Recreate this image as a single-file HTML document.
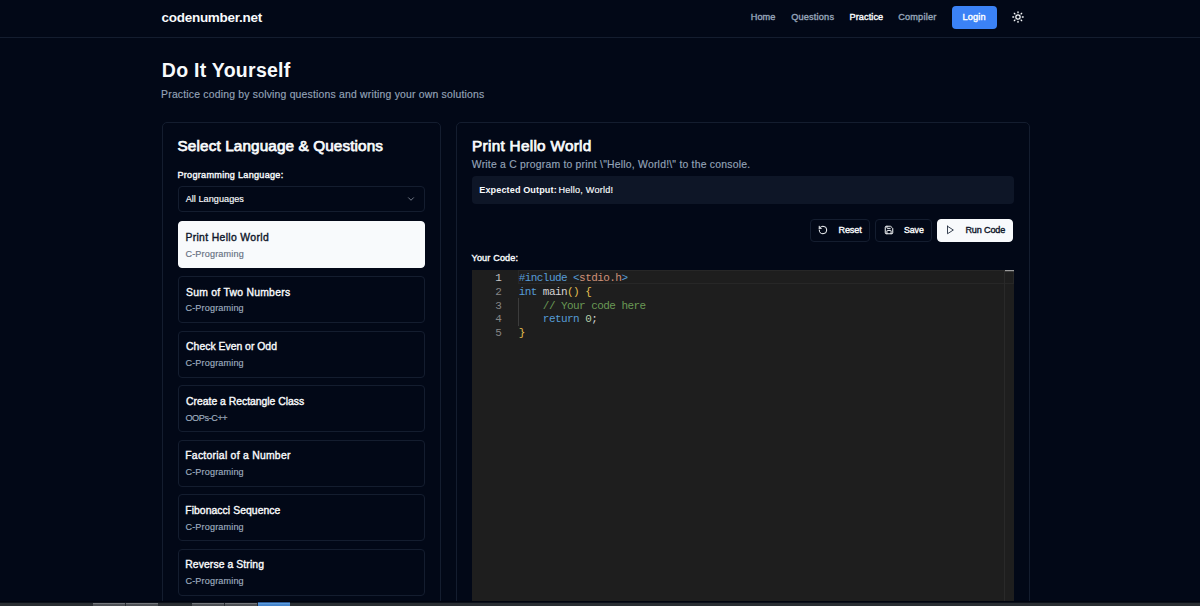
<!DOCTYPE html>
<html lang="en">
<head>
<meta charset="utf-8">
<title>Do It Yourself - codenumber.net</title>
<style>
*{box-sizing:border-box;margin:0;padding:0}
html,body{width:1200px;height:606px;overflow:hidden;background:#020817}
body{font-family:"Liberation Sans",sans-serif;color:#f8fafc;position:relative}
.a,.t{position:absolute;white-space:nowrap}
.t{z-index:5}
#hdr{left:0;top:37px;width:1200px;height:1px;background:#141d2f}
#loginb{left:952px;top:6px;width:45px;height:23px;border-radius:4px;background:#3b82f6}
#sun{left:1012px;top:11px;width:12px;height:12px}
.card{border:1px solid #141d2f;border-radius:5px}
#c1{left:162px;top:122px;width:279px;height:520px}
#c2{left:456px;top:122px;width:574px;height:520px}
#sel{left:178px;top:186px;width:247px;height:26px;border:1px solid #141d2f;border-radius:4px}
#chev{left:406.2px;top:193.6px;width:10px;height:10px}
.q{left:178px;width:247px;border:1px solid #141d2f;border-radius:4px}
.q.on{background:#f8fafc;border-color:#f8fafc}
#exp{left:472px;top:176px;width:542px;height:28px;border-radius:4px;background:#0e1627}
.btn{top:219px;height:23px;border:1px solid #141d2f;border-radius:4px}
#run{background:#f8fafc;border-color:#f8fafc}
.ic{top:225.3px;width:10px;height:10px;stroke-width:2.4}
#ed{left:472px;top:270px;width:542px;height:340px;background:#1e1e1e;overflow:hidden;font-family:"Liberation Mono",monospace;font-size:11px;letter-spacing:-0.561px}
.ln{position:absolute;left:0;margin-top:1px;width:29.3px;text-align:right;color:#858585;height:14px;line-height:14px}
.ln.cur{color:#c6c6c6}
.cl{position:absolute;left:46.7px;margin-top:1px;height:14px;line-height:14px;white-space:pre;color:#d4d4d4}
#curline{position:absolute;left:46px;top:0;width:496px;height:14px;border:1px solid #272727}
#ruler{position:absolute;left:532px;top:0;width:10px;height:340px;border-left:1px solid #292929}
#rcur{position:absolute;left:533px;top:0;width:9px;height:1px;background:#9a9a9a;box-shadow:0 1px 0 rgba(150,150,150,.25)}
#guide{position:absolute;left:46px;top:28px;width:1px;height:28px;background:#3c3c3c}
#bar{left:0;top:601px;width:1200px;height:5px;background:linear-gradient(#01040e 0,#01040e 1px,#0c111b 1px,#0c111b 2px,#2a2e33 2px,#2a2e33 5px)}
.tab{top:603px;height:3px;background:linear-gradient(#74777c 0,#74777c 1px,#505358 1px,#4a4d52 3px)}
#btab{left:258px;top:601px;width:32px;height:5px;background:linear-gradient(#01030a 0,#01030a 1px,#2c5c9c 1px,#2c5c9c 2px,#5c9cdc 2px,#5c9cdc 3px,#4a8ad0 3px,#3f7ec6 5px)}
</style>
</head>
<body>
<div id="hdr" class="a"></div>
<div id="loginb" class="a"></div>
<svg id="sun" class="a" viewBox="0 0 24 24" fill="none" stroke="#f8fafc" stroke-width="2" stroke-linecap="round" stroke-linejoin="round"><circle cx="12" cy="12" r="4.3" stroke-width="2.5"/><path stroke-width="2.7" d="M12 1.7v1.6M12 20.7v1.6M4.7 4.7l1.1 1.1M18.2 18.2l1.1 1.1M1.7 12h1.6M20.7 12h1.6M5.8 18.2l-1.1 1.1M19.3 4.7l-1.1 1.1"/></svg>
<div id="c1" class="a card"></div>
<div id="c2" class="a card"></div>
<div id="sel" class="a"></div>
<svg id="chev" class="a" viewBox="0 0 24 24" fill="none" stroke="#8a92a0" stroke-width="2" stroke-linecap="round" stroke-linejoin="round"><path d="M6 9l6 6 6-6"/></svg>
<div class="a q on" style="top:221px;height:47px"></div>
<div class="a q" style="top:276px;height:47px"></div>
<div class="a q" style="top:331px;height:47px"></div>
<div class="a q" style="top:385px;height:47px"></div>
<div class="a q" style="top:440px;height:47px"></div>
<div class="a q" style="top:494px;height:47px"></div>
<div class="a q" style="top:549px;height:47px"></div>
<div id="exp" class="a"></div>
<div class="a btn" style="left:810px;width:60px"></div>
<div class="a btn" style="left:875px;width:57px"></div>
<div id="run" class="a btn" style="left:937px;width:76px"></div>
<svg class="a ic" style="left:818.3px" viewBox="0 0 24 24" fill="none" stroke="#f8fafc" stroke-linecap="round" stroke-linejoin="round"><path d="M3 12a9 9 0 1 0 9-9 9.75 9.75 0 0 0-6.74 2.74L3 8"/><path d="M3 3v5h5"/></svg>
<svg class="a ic" style="left:883.6px" viewBox="0 0 24 24" fill="none" stroke="#f8fafc" stroke-linecap="round" stroke-linejoin="round"><path d="M15.2 3a2 2 0 0 1 1.4.6l3.8 3.8a2 2 0 0 1 .6 1.4V19a2 2 0 0 1-2 2H5a2 2 0 0 1-2-2V5a2 2 0 0 1 2-2z"/><path d="M17 21v-7a1 1 0 0 0-1-1H8a1 1 0 0 0-1 1v7"/><path d="M7 3v4a1 1 0 0 0 1 1h7"/></svg>
<svg class="a ic" style="left:944.5px;stroke-width:2.1" viewBox="0 0 24 24" fill="none" stroke="#1e293b" stroke-linecap="round" stroke-linejoin="round"><polygon points="6 3 20 12 6 21 6 3"/></svg>
<div id="ed" class="a">
<div id="curline"></div>
<div id="guide"></div>
<div class="ln cur" style="top:0">1</div>
<div class="ln" style="top:13.8px">2</div>
<div class="ln" style="top:27.5px">3</div>
<div class="ln" style="top:41.3px">4</div>
<div class="ln" style="top:55px">5</div>
<div class="cl" style="top:0"><span style="color:#569cd6">#include </span><span style="color:#569cd6">&lt;</span><span style="color:#ce9178">stdio.h</span><span style="color:#569cd6">&gt;</span></div>
<div class="cl" style="top:13.8px"><span style="color:#569cd6">int</span> main<span style="color:#e6c050">()</span> <span style="color:#e6c050">{</span></div>
<div class="cl" style="top:27.5px">    <span style="color:#6a9955">// Your code here</span></div>
<div class="cl" style="top:41.3px">    <span style="color:#569cd6">return</span> <span style="color:#b5cea8">0</span>;</div>
<div class="cl" style="top:55px"><span style="color:#e6c050">}</span></div>
<div id="ruler"></div>
<div id="rcur"></div>
</div>
<div id="bar" class="a"></div>
<div class="a tab" style="left:93px;width:32px"></div>
<div class="a tab" style="left:126px;width:32px"></div>
<div class="a tab" style="left:192px;width:32px"></div>
<div class="a tab" style="left:225px;width:32px"></div>
<div id="btab" class="a"></div>
<div id="logo" class="t" style="left:161.41px;top:11.00px;font-size:13.5px;line-height:13.5px;font-weight:700;color:#f8fafc;letter-spacing:-0.257px;">codenumber.net</div>
<div id="n1" class="t" style="left:750.75px;top:13.00px;font-size:9.2px;line-height:9.2px;font-weight:400;color:#94a3b8;letter-spacing:0.064px;-webkit-text-stroke:0.38px #94a3b8;">Home</div>
<div id="n2" class="t" style="left:791.15px;top:13.00px;font-size:9.2px;line-height:9.2px;font-weight:400;color:#94a3b8;letter-spacing:0.188px;-webkit-text-stroke:0.38px #94a3b8;">Questions</div>
<div id="n3" class="t" style="left:849.52px;top:13.00px;font-size:9.2px;line-height:9.2px;font-weight:400;color:#f8fafc;letter-spacing:0.067px;-webkit-text-stroke:0.38px #f8fafc;">Practice</div>
<div id="n4" class="t" style="left:898.14px;top:13.00px;font-size:9.2px;line-height:9.2px;font-weight:400;color:#94a3b8;letter-spacing:0.195px;-webkit-text-stroke:0.38px #94a3b8;">Compiler</div>
<div id="login" class="t" style="left:962.45px;top:13.00px;font-size:9.2px;line-height:9.2px;font-weight:400;color:#ffffff;letter-spacing:0.202px;-webkit-text-stroke:0.38px #ffffff;">Login</div>
<div id="h1" class="t" style="left:161.87px;top:61.00px;font-size:19.5px;line-height:19.5px;font-weight:700;color:#f8fafc;letter-spacing:0.267px;">Do It Yourself</div>
<div id="sub" class="t" style="left:161.08px;top:90.00px;font-size:10.4px;line-height:10.4px;font-weight:400;color:#94a3b8;letter-spacing:0.205px;-webkit-text-stroke:0.16px #94a3b8;">Practice coding by solving questions and writing your own solutions</div>
<div id="ct1" class="t" style="left:177.56px;top:138.00px;font-size:15.3px;line-height:15.3px;font-weight:400;color:#f8fafc;letter-spacing:0.118px;-webkit-text-stroke:0.75px #f8fafc;">Select Language &amp; Questions</div>
<div id="lbl1" class="t" style="left:177.45px;top:171.00px;font-size:9.1px;line-height:9.1px;font-weight:400;color:#f8fafc;letter-spacing:0.284px;-webkit-text-stroke:0.38px #f8fafc;">Programming Language:</div>
<div id="selt" class="t" style="left:185.65px;top:195.00px;font-size:9.1px;line-height:9.1px;font-weight:400;color:#f8fafc;letter-spacing:0.053px;-webkit-text-stroke:0.16px #f8fafc;">All Languages</div>
<div id="ct2" class="t" style="left:472.12px;top:138.00px;font-size:15.3px;line-height:15.3px;font-weight:400;color:#f8fafc;letter-spacing:0.293px;-webkit-text-stroke:0.75px #f8fafc;">Print Hello World</div>
<div id="desc" class="t" style="left:471.81px;top:160.00px;font-size:10.4px;line-height:10.4px;font-weight:400;color:#94a3b8;letter-spacing:0.223px;-webkit-text-stroke:0.16px #94a3b8;">Write a C program to print \"Hello, World!\" to the console.</div>
<div id="exp1" class="t" style="left:479.23px;top:186.00px;font-size:9.1px;line-height:9.1px;font-weight:700;color:#f8fafc;letter-spacing:0.112px;">Expected Output:</div>
<div id="exp2" class="t" style="left:558.51px;top:186.00px;font-size:9.1px;line-height:9.1px;font-weight:400;color:#f8fafc;letter-spacing:0.224px;-webkit-text-stroke:0.16px #f8fafc;">Hello, World!</div>
<div id="b1" class="t" style="left:838.45px;top:226.00px;font-size:9.1px;line-height:9.1px;font-weight:400;color:#f8fafc;letter-spacing:-0.119px;-webkit-text-stroke:0.38px #f8fafc;">Reset</div>
<div id="b2" class="t" style="left:904.02px;top:226.00px;font-size:8.8px;line-height:8.8px;font-weight:400;color:#f8fafc;letter-spacing:-0.087px;-webkit-text-stroke:0.38px #f8fafc;">Save</div>
<div id="b3" class="t" style="left:965.45px;top:226.00px;font-size:9.1px;line-height:9.1px;font-weight:400;color:#0f172a;letter-spacing:-0.167px;-webkit-text-stroke:0.38px #0f172a;">Run Code</div>
<div id="lbl2" class="t" style="left:471.52px;top:254.00px;font-size:9.1px;line-height:9.1px;font-weight:400;color:#f8fafc;letter-spacing:0.152px;-webkit-text-stroke:0.38px #f8fafc;">Your Code:</div>
<div id="it0" class="t" style="left:185.39px;top:233.00px;font-size:10.4px;line-height:10.4px;font-weight:400;color:#0f172a;letter-spacing:0.345px;-webkit-text-stroke:0.38px #0f172a;">Print Hello World</div>
<div id="is0" class="t" style="left:185.44px;top:250.00px;font-size:9.1px;line-height:9.1px;font-weight:400;color:#667082;letter-spacing:0.151px;-webkit-text-stroke:0.16px #667082;">C-Programing</div>
<div id="it1" class="t" style="left:186.05px;top:288.00px;font-size:10.4px;line-height:10.4px;font-weight:400;color:#f8fafc;letter-spacing:0.255px;-webkit-text-stroke:0.38px #f8fafc;">Sum of Two Numbers</div>
<div id="is1" class="t" style="left:185.44px;top:304.00px;font-size:9.1px;line-height:9.1px;font-weight:400;color:#9eacbf;letter-spacing:0.149px;-webkit-text-stroke:0.16px #9eacbf;">C-Programing</div>
<div id="it2" class="t" style="left:186.10px;top:342.00px;font-size:10.4px;line-height:10.4px;font-weight:400;color:#f8fafc;letter-spacing:0.010px;-webkit-text-stroke:0.38px #f8fafc;">Check Even or Odd</div>
<div id="is2" class="t" style="left:185.44px;top:359.00px;font-size:9.1px;line-height:9.1px;font-weight:400;color:#9eacbf;letter-spacing:0.149px;-webkit-text-stroke:0.16px #9eacbf;">C-Programing</div>
<div id="it3" class="t" style="left:186.10px;top:397.00px;font-size:10.4px;line-height:10.4px;font-weight:400;color:#f8fafc;letter-spacing:-0.013px;-webkit-text-stroke:0.38px #f8fafc;">Create a Rectangle Class</div>
<div id="is3" class="t" style="left:185.43px;top:414.00px;font-size:9.1px;line-height:9.1px;font-weight:400;color:#9eacbf;letter-spacing:-0.389px;-webkit-text-stroke:0.16px #9eacbf;">OOPs-C++</div>
<div id="it4" class="t" style="left:185.26px;top:451.00px;font-size:10.4px;line-height:10.4px;font-weight:400;color:#f8fafc;letter-spacing:0.262px;-webkit-text-stroke:0.38px #f8fafc;">Factorial of a Number</div>
<div id="is4" class="t" style="left:185.44px;top:468.00px;font-size:9.1px;line-height:9.1px;font-weight:400;color:#9eacbf;letter-spacing:0.149px;-webkit-text-stroke:0.16px #9eacbf;">C-Programing</div>
<div id="it5" class="t" style="left:185.26px;top:506.00px;font-size:10.4px;line-height:10.4px;font-weight:400;color:#f8fafc;letter-spacing:0.055px;-webkit-text-stroke:0.38px #f8fafc;">Fibonacci Sequence</div>
<div id="is5" class="t" style="left:185.44px;top:523.00px;font-size:9.1px;line-height:9.1px;font-weight:400;color:#9eacbf;letter-spacing:0.149px;-webkit-text-stroke:0.16px #9eacbf;">C-Programing</div>
<div id="it6" class="t" style="left:185.26px;top:560.00px;font-size:10.4px;line-height:10.4px;font-weight:400;color:#f8fafc;letter-spacing:0.085px;-webkit-text-stroke:0.38px #f8fafc;">Reverse a String</div>
<div id="is6" class="t" style="left:185.44px;top:577.00px;font-size:9.1px;line-height:9.1px;font-weight:400;color:#9eacbf;letter-spacing:0.149px;-webkit-text-stroke:0.16px #9eacbf;">C-Programing</div>
</body>
</html>
